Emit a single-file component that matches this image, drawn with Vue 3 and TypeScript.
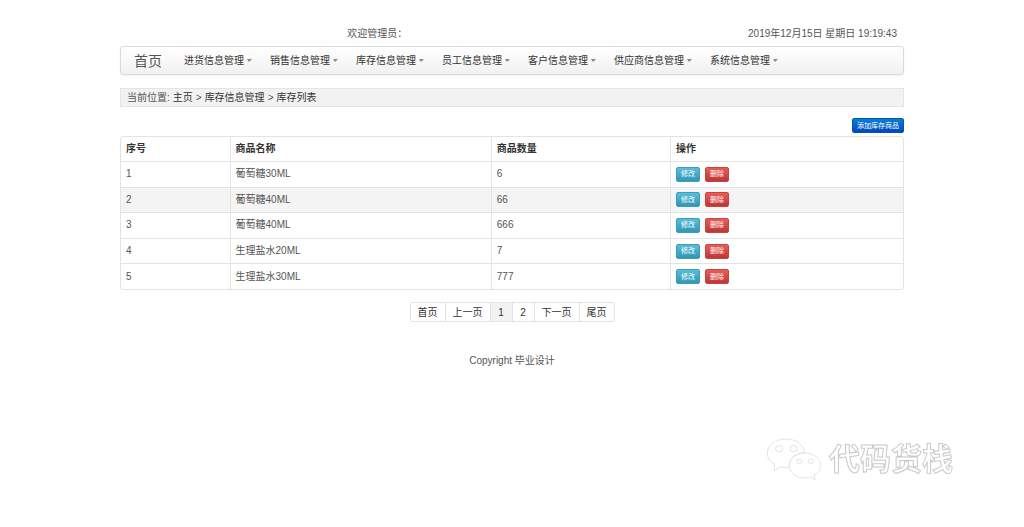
<script setup lang="ts">
interface Product {
  id: number
  name: string
  quantity: number
}

const menus: string[] = [
  '进货信息管理',
  '销售信息管理',
  '库存信息管理',
  '员工信息管理',
  '客户信息管理',
  '供应商信息管理',
  '系统信息管理',
]

const products: Product[] = [
  { id: 1, name: '葡萄糖30ML', quantity: 6 },
  { id: 2, name: '葡萄糖40ML', quantity: 66 },
  { id: 3, name: '葡萄糖40ML', quantity: 666 },
  { id: 4, name: '生理盐水20ML', quantity: 7 },
  { id: 5, name: '生理盐水30ML', quantity: 777 },
]

const highlightedId = 2
const pages: string[] = ['首页', '上一页', '1', '2', '下一页', '尾页']
const currentPage = '1'
</script>

<template>
  <div class="page">
    <header class="top">
      <span>欢迎管理员：</span>
      <time datetime="2019-12-15T19:19:43">2019年12月15日 星期日 19:19:43</time>
    </header>

    <nav class="navbar">
      <a class="brand" href="#">首页</a>
      <ul class="menu">
        <li v-for="m in menus" :key="m">
          <a href="#">{{ m }}<i class="caret"></i></a>
        </li>
      </ul>
    </nav>

    <nav class="crumbs">
      <span>当前位置:</span>
      <a href="#">主页</a>
      <span>&gt;</span>
      <a href="#">库存信息管理</a>
      <span>&gt;</span>
      <a href="#">库存列表</a>
    </nav>

    <main>
      <div class="actions">
        <button type="button" class="btn primary">添加库存商品</button>
      </div>

      <table class="grid">
        <thead>
          <tr>
            <th class="c-id">序号</th>
            <th class="c-name">商品名称</th>
            <th class="c-qty">商品数量</th>
            <th>操作</th>
          </tr>
        </thead>
        <tbody>
          <tr v-for="p in products" :key="p.id" :class="{ active: p.id === highlightedId }">
            <td>{{ p.id }}</td>
            <td>{{ p.name }}</td>
            <td>{{ p.quantity }}</td>
            <td>
              <div class="ops">
                <button type="button" class="btn info">修改</button>
                <button type="button" class="btn danger">删除</button>
              </div>
            </td>
          </tr>
        </tbody>
      </table>

      <ul class="pager">
        <li v-for="p in pages" :key="p">
          <a href="#" :class="{ current: p === currentPage }">{{ p }}</a>
        </li>
      </ul>
    </main>

    <footer class="foot">Copyright 毕业设计</footer>

    <div class="mark">
      <svg viewBox="30 36 171 135" width="57" height="45" fill="#fff" stroke="#d6d6d6" stroke-width="2">
        <path d="M93 42C62 42 37 60 37 84C37 99 46 111 58 117L58 137L76 126C84 128 94 128 104 126C100 102 120 84 149 82C145 58 122 42 93 42Z" />
        <rect x="62" y="62" width="21" height="18" rx="8" />
        <rect x="105" y="62" width="21" height="18" rx="8" />
        <path d="M150 84C124 84 103 101 103 122C103 143 124 159 150 159C157 159 163 158 168 156L180 164L178 150C190 144 197 134 197 122C197 101 176 84 150 84Z" />
        <rect x="126" y="103" width="14" height="12" rx="3" />
        <rect x="160" y="103" width="14" height="12" rx="3" />
      </svg>
      <span>代码货栈</span>
    </div>
  </div>
</template>

<style>
body {
  margin: 0;
  background: #fff;
}
</style>

<style scoped>
.page {
  box-sizing: border-box;
  max-width: 784px;
  margin: 0 auto;
  padding-top: 27px;
  font-family: "Liberation Sans", "Noto Sans CJK SC", sans-serif;
  font-size: 10px;
  line-height: 14px;
  color: #555;
}

a {
  color: #333;
  text-decoration: none;
}

ul {
  margin: 0;
  padding: 0;
  list-style: none;
}

.top {
  display: flex;
  justify-content: space-between;
  padding: 0 7px 0 29%;
}

.navbar {
  display: flex;
  align-items: center;
  box-sizing: border-box;
  height: 29px;
  margin-top: 5px;
  padding-left: 13px;
  border: 1px solid #dadada;
  border-radius: 3px;
  background: linear-gradient(#fff, #f1f1f1);
  box-shadow: 0 1px 2px rgba(0, 0, 0, 0.06);
}

.brand {
  margin-right: 22px;
  font-size: 14px;
  color: #555;
}

.menu {
  display: flex;
  gap: 18px;
}

.menu a {
  display: flex;
  align-items: center;
  gap: 3px;
  white-space: nowrap;
}

.caret {
  width: 0;
  height: 0;
  border: solid transparent;
  border-width: 3px 3px 0 2px;
  border-top-color: #888;
}

.crumbs {
  display: flex;
  align-items: center;
  gap: 3px;
  box-sizing: border-box;
  height: 19px;
  margin-top: 13px;
  padding: 0 6px;
  border: 1px solid #e4e4e4;
  background: #f2f2f2;
}

.actions {
  display: flex;
  justify-content: flex-end;
  margin: 11px 0 3px;
}

.btn {
  box-sizing: border-box;
  height: 15px;
  padding: 0 4px;
  border: 1px solid;
  border-radius: 2px;
  font-family: inherit;
  font-size: 7px;
  line-height: 12px;
  color: #fff;
}

.primary {
  border-color: #0055b8;
  background: linear-gradient(#0a7fd0, #0346c0);
}

.info {
  border-color: #3a9dbb;
  background: linear-gradient(#58bddb, #3097b5);
}

.danger {
  border-color: #c74440;
  background: linear-gradient(#e95d58, #be3732);
}

.grid {
  width: 100%;
  height: 154px;
  table-layout: fixed;
  border: 1px solid #e3e3e3;
  border-radius: 3px;
  border-collapse: separate;
  border-spacing: 0;
}

.grid th,
.grid td {
  padding: 0 5px;
  text-align: left;
  vertical-align: middle;
}

.grid th {
  height: 24px;
  color: #333;
}

.grid td {
  border-top: 1px solid #e3e3e3;
}

.grid th + th,
.grid td + td {
  border-left: 1px solid #e3e3e3;
}

.c-id {
  width: 12.6%;
}

.c-name {
  width: 32%;
}

.c-qty {
  width: 21.5%;
}

.active td {
  background: #f4f4f4;
}

.ops {
  display: flex;
  gap: 5px;
}

.pager {
  display: flex;
  width: fit-content;
  margin: 12px auto 0;
  border: 1px solid #e3e3e3;
  border-radius: 3px;
}

.pager li + li {
  border-left: 1px solid #e3e3e3;
}

.pager a {
  display: block;
  box-sizing: border-box;
  min-width: 21px;
  padding: 3px 7px 1px;
  text-align: center;
}

.pager .current {
  background: #f2f2f2;
}

.foot {
  margin-top: 32px;
  text-align: center;
}

.mark {
  position: fixed;
  right: 71px;
  bottom: 45px;
  display: flex;
  align-items: center;
  gap: 7px;
  font-size: 31px;
  font-weight: bold;
  line-height: 44px;
  color: #fff;
}

.mark span {
  padding-top: 2px;
  -webkit-text-stroke: 1px #cacaca;
}
</style>
